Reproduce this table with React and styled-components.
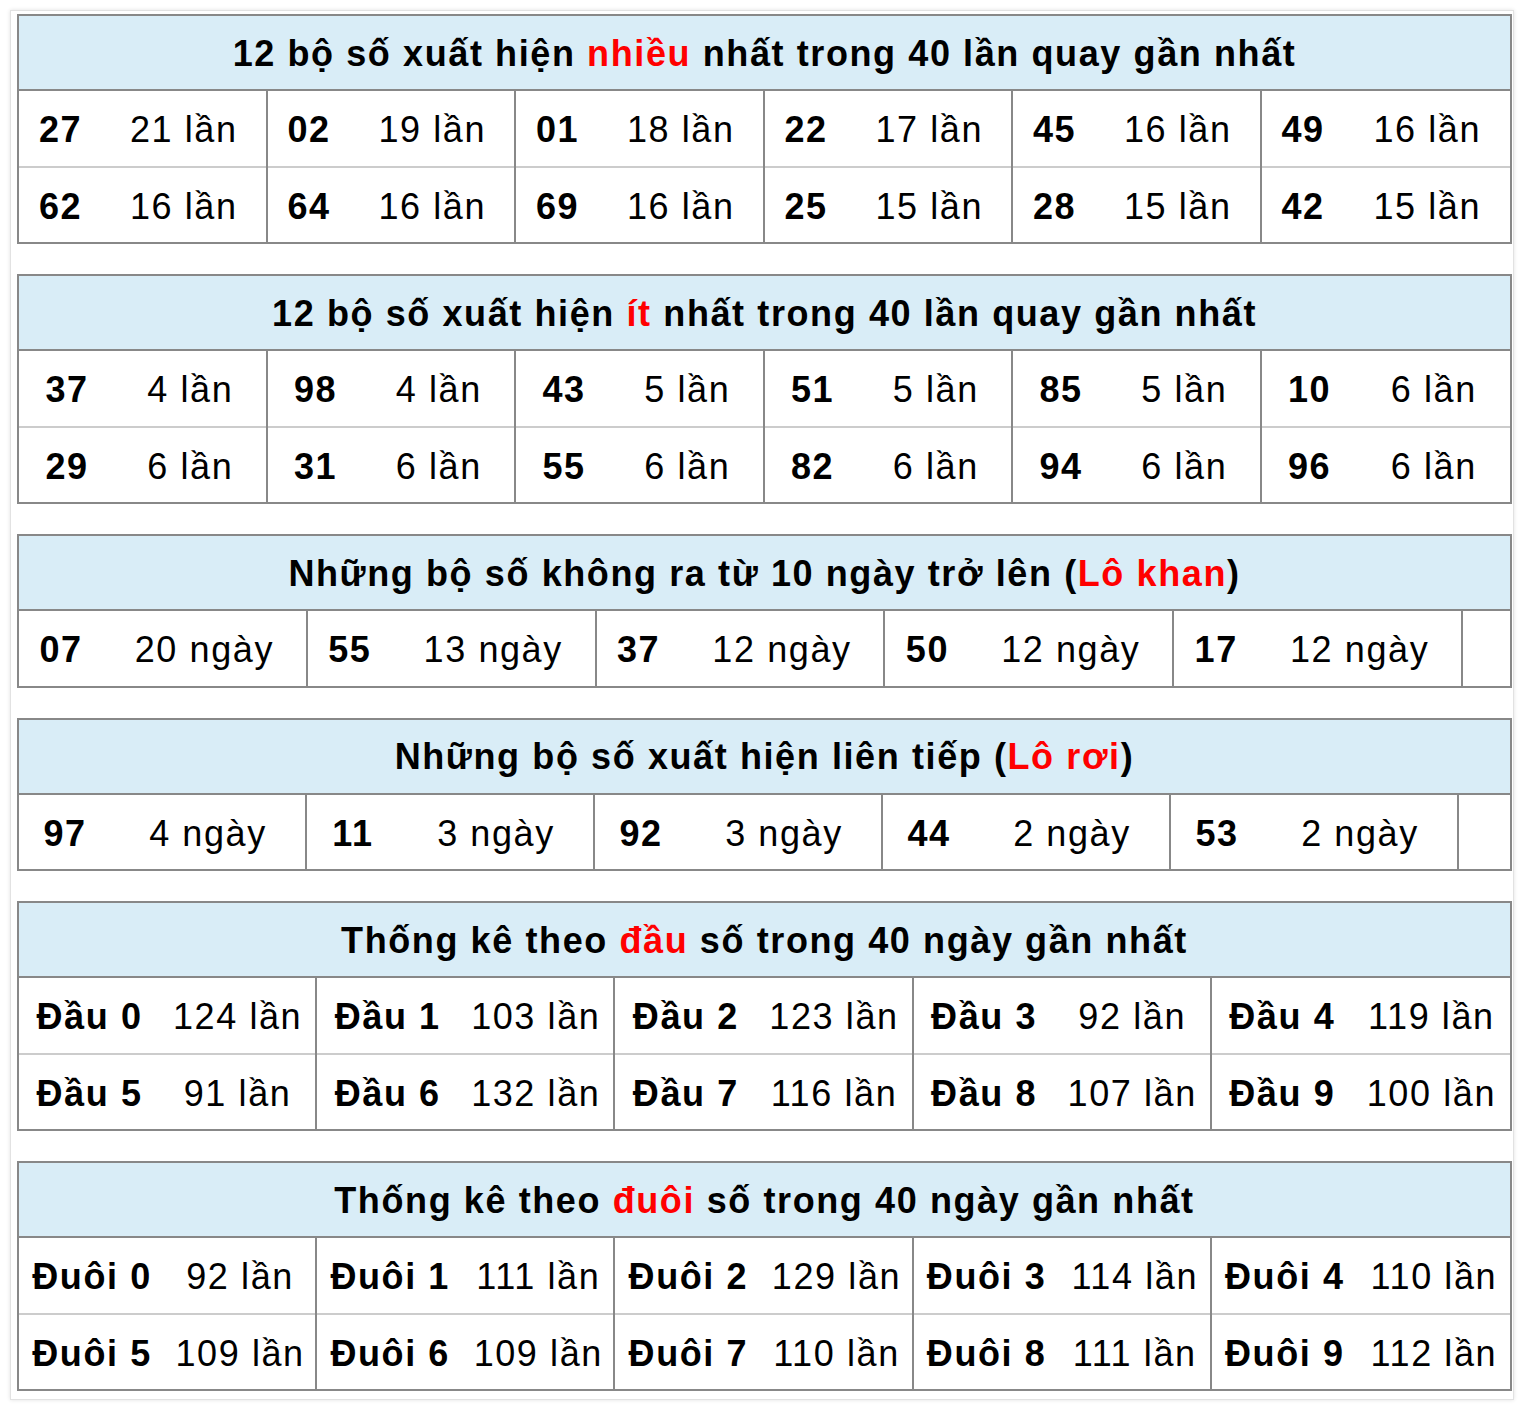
import React from 'react';
import styled, { createGlobalStyle } from 'styled-components';

const GlobalStyle = createGlobalStyle`
  body {
    margin: 0;
    background: #ffffff;
    font-family: "Liberation Sans", Arial, Helvetica, sans-serif;
    color: #000;
  }
`;

const Page = styled.div`
  padding: 10px;
`;

const Card = styled.div`
  box-sizing: border-box;
  width: 1504px;
  padding: 3px 1px 8px 6px;
  border: 1px solid #e2e2e2;
  box-shadow: 0 0 4px rgba(0, 0, 0, 0.12);
  background: #fff;
  display: flex;
  flex-direction: column;
  gap: 30px;
`;

const Table = styled.div`
  width: 1495px;
  box-sizing: border-box;
  border: 2px solid #888;
  display: flex;
  flex-direction: column;
`;

const Header = styled.div`
  height: 73px;
  background: #d9edf7;
  border-bottom: 2px solid #888;
  display: flex;
  align-items: center;
  justify-content: center;
  font-size: 36px;
  letter-spacing: 1.6px;
  font-weight: bold;
  white-space: nowrap;
`;

const Title = styled.span`
  padding-top: 2px;
`;

const Hot = styled.span`
  color: #ff0000;
`;

const Cell = styled.div`
  box-sizing: border-box;
  height: 74.5px;
  padding-top: 4px;
  display: flex;
  align-items: center;
  justify-content: center;
  font-size: 36px;
  letter-spacing: 1.6px;
  white-space: nowrap;
  font-weight: ${(p) => (p.$bold ? 'bold' : 'normal')};
`;

const Row = styled.div`
  display: grid;
  grid-template-columns: ${(p) => p.$cols};

  & + & ${Cell} {
    height: 76.5px;
    border-top: 2px solid #ccc;
  }
`;

const Group = styled.div`
  display: grid;
  grid-template-columns: ${(p) => p.$num}px 1fr;
  border-right: 2px solid #888;

  &:last-child {
    border-right: none;
  }
`;

const Blank = styled.div``;

const tables = [
  {
    title: ['12 bộ số xuất hiện ', 'nhiều', ' nhất trong 40 lần quay gần nhất'],
    cols: 'repeat(6, 1fr)',
    num: 83,
    rows: [
      [['27', '21 lần'], ['02', '19 lần'], ['01', '18 lần'], ['22', '17 lần'], ['45', '16 lần'], ['49', '16 lần']],
      [['62', '16 lần'], ['64', '16 lần'], ['69', '16 lần'], ['25', '15 lần'], ['28', '15 lần'], ['42', '15 lần']],
    ],
  },
  {
    title: ['12 bộ số xuất hiện ', 'ít', ' nhất trong 40 lần quay gần nhất'],
    cols: 'repeat(6, 1fr)',
    num: 96,
    rows: [
      [['37', '4 lần'], ['98', '4 lần'], ['43', '5 lần'], ['51', '5 lần'], ['85', '5 lần'], ['10', '6 lần']],
      [['29', '6 lần'], ['31', '6 lần'], ['55', '6 lần'], ['82', '6 lần'], ['94', '6 lần'], ['96', '6 lần']],
    ],
  },
  {
    title: ['Những bộ số không ra từ 10 ngày trở lên (', 'Lô khan', ')'],
    cols: 'repeat(5, 1fr) 47px',
    num: 84,
    blank: true,
    rows: [
      [['07', '20 ngày'], ['55', '13 ngày'], ['37', '12 ngày'], ['50', '12 ngày'], ['17', '12 ngày']],
    ],
  },
  {
    title: ['Những bộ số xuất hiện liên tiếp (', 'Lô rơi', ')'],
    cols: 'repeat(5, 1fr) 51px',
    num: 92,
    blank: true,
    rows: [
      [['97', '4 ngày'], ['11', '3 ngày'], ['92', '3 ngày'], ['44', '2 ngày'], ['53', '2 ngày']],
    ],
  },
  {
    title: ['Thống kê theo ', 'đầu', ' số trong 40 ngày gần nhất'],
    cols: 'repeat(5, 1fr)',
    num: 141,
    rows: [
      [['Đầu 0', '124 lần'], ['Đầu 1', '103 lần'], ['Đầu 2', '123 lần'], ['Đầu 3', '92 lần'], ['Đầu 4', '119 lần']],
      [['Đầu 5', '91 lần'], ['Đầu 6', '132 lần'], ['Đầu 7', '116 lần'], ['Đầu 8', '107 lần'], ['Đầu 9', '100 lần']],
    ],
  },
  {
    title: ['Thống kê theo ', 'đuôi', ' số trong 40 ngày gần nhất'],
    cols: 'repeat(5, 1fr)',
    num: 146,
    rows: [
      [['Đuôi 0', '92 lần'], ['Đuôi 1', '111 lần'], ['Đuôi 2', '129 lần'], ['Đuôi 3', '114 lần'], ['Đuôi 4', '110 lần']],
      [['Đuôi 5', '109 lần'], ['Đuôi 6', '109 lần'], ['Đuôi 7', '110 lần'], ['Đuôi 8', '111 lần'], ['Đuôi 9', '112 lần']],
    ],
  },
];

const StatTable = ({ data }) => (
  <Table>
    <Header>
      <Title>
        {data.title[0]}
        <Hot>{data.title[1]}</Hot>
        {data.title[2]}
      </Title>
    </Header>
    {data.rows.map((row, i) => (
      <Row key={i} $cols={data.cols}>
        {row.map(([num, count]) => (
          <Group key={num} $num={data.num}>
            <Cell $bold>{num}</Cell>
            <Cell>{count}</Cell>
          </Group>
        ))}
        {data.blank ? <Blank /> : null}
      </Row>
    ))}
  </Table>
);

export default function App() {
  return (
    <Page>
      <GlobalStyle />
      <Card>
        {tables.map((t, i) => (
          <StatTable key={i} data={t} />
        ))}
      </Card>
    </Page>
  );
}
